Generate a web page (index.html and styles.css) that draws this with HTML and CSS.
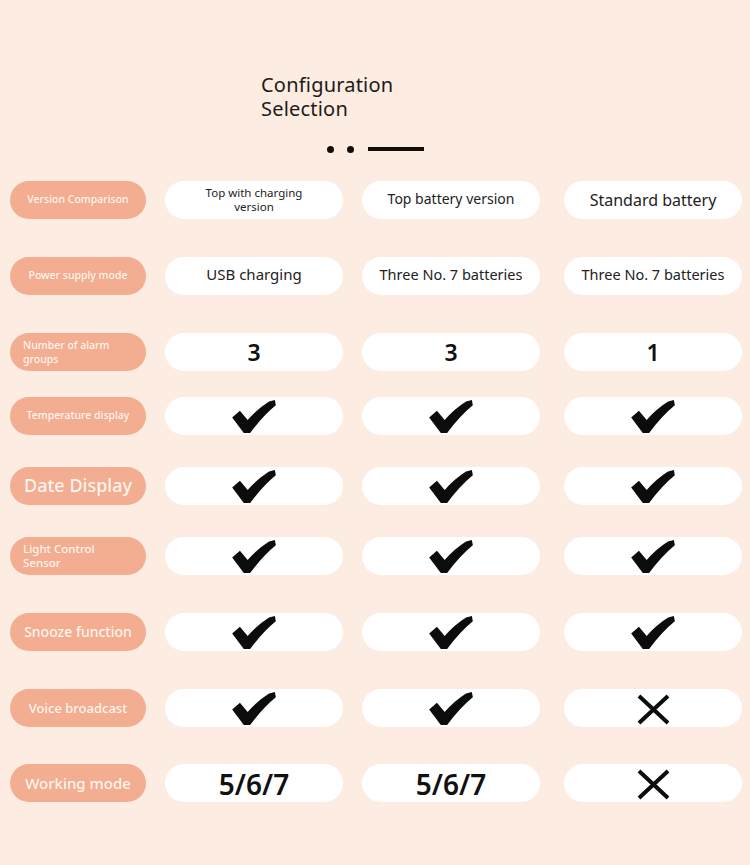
FILE: index.html
```html
<!DOCTYPE html>
<html lang="en">
<head>
<meta charset="utf-8">
<title>Configuration Selection</title>
<link rel="stylesheet" href="styles.css">
</head>
<body>
<div class="page">
  <header class="head">
    <h1 class="title"><span class="tl">Configuration</span><span class="tl">Selection</span></h1>
    <div class="deco"><span class="dot"></span><span class="dot"></span><span class="bar"></span></div>
  </header>

  <div class="table">
    <div class="row">
      <div class="label sz-11">Version Comparison</div>
      <div class="cell"><span class="txt sz-12 two">Top with charging<br>version</span></div>
      <div class="cell"><span class="txt sz-14 up">Top battery version</span></div>
      <div class="cell"><span class="txt sz-16">Standard battery</span></div>
    </div>

    <div class="row gap-l">
      <div class="label sz-11">Power supply mode</div>
      <div class="cell"><span class="txt sz-15 up2">USB charging</span></div>
      <div class="cell"><span class="txt sz-145 up2">Three No. 7 batteries</span></div>
      <div class="cell"><span class="txt sz-145 up2">Three No. 7 batteries</span></div>
    </div>

    <div class="row gap-l">
      <div class="label left sz-11">Number of alarm<br>groups</div>
      <div class="cell"><span class="num">3</span></div>
      <div class="cell"><span class="num">3</span></div>
      <div class="cell"><span class="num">1</span></div>
    </div>

    <div class="row gap-s">
      <div class="label sz-11">Temperature display</div>
      <div class="cell"><svg class="check" viewBox="0 0 45 34"><path d="M0 18 L8 11 L16 20.5 Q26 9 38 1.5 L44 0 L45 5.5 Q32 16 18.5 34 L12 34 Z"/></svg></div>
      <div class="cell"><svg class="check" viewBox="0 0 45 34"><path d="M0 18 L8 11 L16 20.5 Q26 9 38 1.5 L44 0 L45 5.5 Q32 16 18.5 34 L12 34 Z"/></svg></div>
      <div class="cell"><svg class="check" viewBox="0 0 45 34"><path d="M0 18 L8 11 L16 20.5 Q26 9 38 1.5 L44 0 L45 5.5 Q32 16 18.5 34 L12 34 Z"/></svg></div>
    </div>

    <div class="row gap-m">
      <div class="label sz-18">Date Display</div>
      <div class="cell"><svg class="check" viewBox="0 0 45 34"><path d="M0 18 L8 11 L16 20.5 Q26 9 38 1.5 L44 0 L45 5.5 Q32 16 18.5 34 L12 34 Z"/></svg></div>
      <div class="cell"><svg class="check" viewBox="0 0 45 34"><path d="M0 18 L8 11 L16 20.5 Q26 9 38 1.5 L44 0 L45 5.5 Q32 16 18.5 34 L12 34 Z"/></svg></div>
      <div class="cell"><svg class="check" viewBox="0 0 45 34"><path d="M0 18 L8 11 L16 20.5 Q26 9 38 1.5 L44 0 L45 5.5 Q32 16 18.5 34 L12 34 Z"/></svg></div>
    </div>

    <div class="row gap-m">
      <div class="label left sz-12">Light Control<br>Sensor</div>
      <div class="cell"><svg class="check" viewBox="0 0 45 34"><path d="M0 18 L8 11 L16 20.5 Q26 9 38 1.5 L44 0 L45 5.5 Q32 16 18.5 34 L12 34 Z"/></svg></div>
      <div class="cell"><svg class="check" viewBox="0 0 45 34"><path d="M0 18 L8 11 L16 20.5 Q26 9 38 1.5 L44 0 L45 5.5 Q32 16 18.5 34 L12 34 Z"/></svg></div>
      <div class="cell"><svg class="check" viewBox="0 0 45 34"><path d="M0 18 L8 11 L16 20.5 Q26 9 38 1.5 L44 0 L45 5.5 Q32 16 18.5 34 L12 34 Z"/></svg></div>
    </div>

    <div class="row gap-l">
      <div class="label sz-14">Snooze function</div>
      <div class="cell"><svg class="check" viewBox="0 0 45 34"><path d="M0 18 L8 11 L16 20.5 Q26 9 38 1.5 L44 0 L45 5.5 Q32 16 18.5 34 L12 34 Z"/></svg></div>
      <div class="cell"><svg class="check" viewBox="0 0 45 34"><path d="M0 18 L8 11 L16 20.5 Q26 9 38 1.5 L44 0 L45 5.5 Q32 16 18.5 34 L12 34 Z"/></svg></div>
      <div class="cell"><svg class="check" viewBox="0 0 45 34"><path d="M0 18 L8 11 L16 20.5 Q26 9 38 1.5 L44 0 L45 5.5 Q32 16 18.5 34 L12 34 Z"/></svg></div>
    </div>

    <div class="row gap-l">
      <div class="label sz-13">Voice broadcast</div>
      <div class="cell"><svg class="check" viewBox="0 0 45 34"><path d="M0 18 L8 11 L16 20.5 Q26 9 38 1.5 L44 0 L45 5.5 Q32 16 18.5 34 L12 34 Z"/></svg></div>
      <div class="cell"><svg class="check" viewBox="0 0 45 34"><path d="M0 18 L8 11 L16 20.5 Q26 9 38 1.5 L44 0 L45 5.5 Q32 16 18.5 34 L12 34 Z"/></svg></div>
      <div class="cell"><svg class="cross" viewBox="0 0 33 31"><path d="M2 2 L31 29 M31 2 L2 29"/></svg></div>
    </div>

    <div class="row gap-l2">
      <div class="label sz-15">Working mode</div>
      <div class="cell"><span class="num big">5/6/7</span></div>
      <div class="cell"><span class="num big">5/6/7</span></div>
      <div class="cell"><svg class="cross" viewBox="0 0 33 31"><path d="M2 2 L31 29 M31 2 L2 29"/></svg></div>
    </div>
  </div>
</div>
</body>
</html>
```

FILE: styles.css
```css
* { box-sizing: border-box; }

html, body {
  margin: 0;
  padding: 0;
  background: #fdece1;
}

body {
  font-family: "Noto Sans", "Open Sans", sans-serif;
  color: #1e1e1e;
}

.page {
  width: 750px;
  height: 865px;
  padding-top: 73px;
}

.head {
  padding-left: 261px;
}

.title {
  margin: 0;
  font-size: 20px;
  line-height: 24px;
  font-weight: 400;
  color: #1e1a18;
  letter-spacing: 0.2px;
  display: flex;
  flex-direction: column;
}

.tl {
  display: block;
  height: 24px;
  line-height: 24px;
}

.deco {
  display: flex;
  align-items: center;
  margin-top: 24px;
  margin-left: 66px;
  height: 8px;
}

.dot {
  width: 7px;
  height: 7px;
  border-radius: 50%;
  background: #120c0a;
  margin-right: 13px;
}

.dot + .dot { margin-right: 14px; }

.bar {
  width: 56px;
  height: 4px;
  background: #120c0a;
}

.table {
  margin-top: 28px;
  padding-left: 10px;
  display: flex;
  flex-direction: column;
}

.row {
  display: grid;
  grid-template-columns: 155px 197px 202px 178px;
  height: 38px;
}

.gap-l { margin-top: 38px; }
.gap-l2 { margin-top: 37px; }
.gap-m { margin-top: 32px; }
.gap-s { margin-top: 26px; }

.label {
  width: 136px;
  height: 38px;
  border-radius: 19px;
  background: #f3ad90;
  color: #fff4ee;
  display: flex;
  align-items: center;
  justify-content: center;
  text-align: center;
  line-height: 1.1;
  white-space: nowrap;
  font-weight: 500;
}

.label.left {
  justify-content: flex-start;
  text-align: left;
  padding-left: 13px;
  line-height: 14px;
}

.cell {
  width: 178px;
  height: 38px;
  border-radius: 19px;
  background: #ffffff;
  display: flex;
  align-items: center;
  justify-content: center;
}

.txt {
  text-align: center;
  white-space: nowrap;
  color: #222;
}

.txt.two { line-height: 14px; }
.txt.up { margin-top: -4px; }
.txt.up2 { margin-top: -4px; }

.sz-11 { font-size: 10.5px; }
.sz-12 { font-size: 11.5px; }
.sz-13 { font-size: 13px; }
.sz-14 { font-size: 14px; }
.sz-145 { font-size: 14.5px; }
.sz-15 { font-size: 15px; }
.sz-16 { font-size: 16px; }
.sz-18 { font-size: 18px; }

.num {
  font-family: "Noto Sans", "Open Sans", sans-serif;
  font-size: 23px;
  font-weight: 600;
  color: #111;
  line-height: 1;
  margin-top: 1px;
}

.num.big {
  font-size: 28px;
  margin-top: 2px;
}

.check {
  width: 44px;
  height: 33px;
  fill: #0c0c0c;
  margin-top: 1px;
}

.cross {
  width: 33px;
  height: 31px;
  stroke: #0c0c0c;
  stroke-width: 4;
  fill: none;
  margin-top: 3px;
}
```
